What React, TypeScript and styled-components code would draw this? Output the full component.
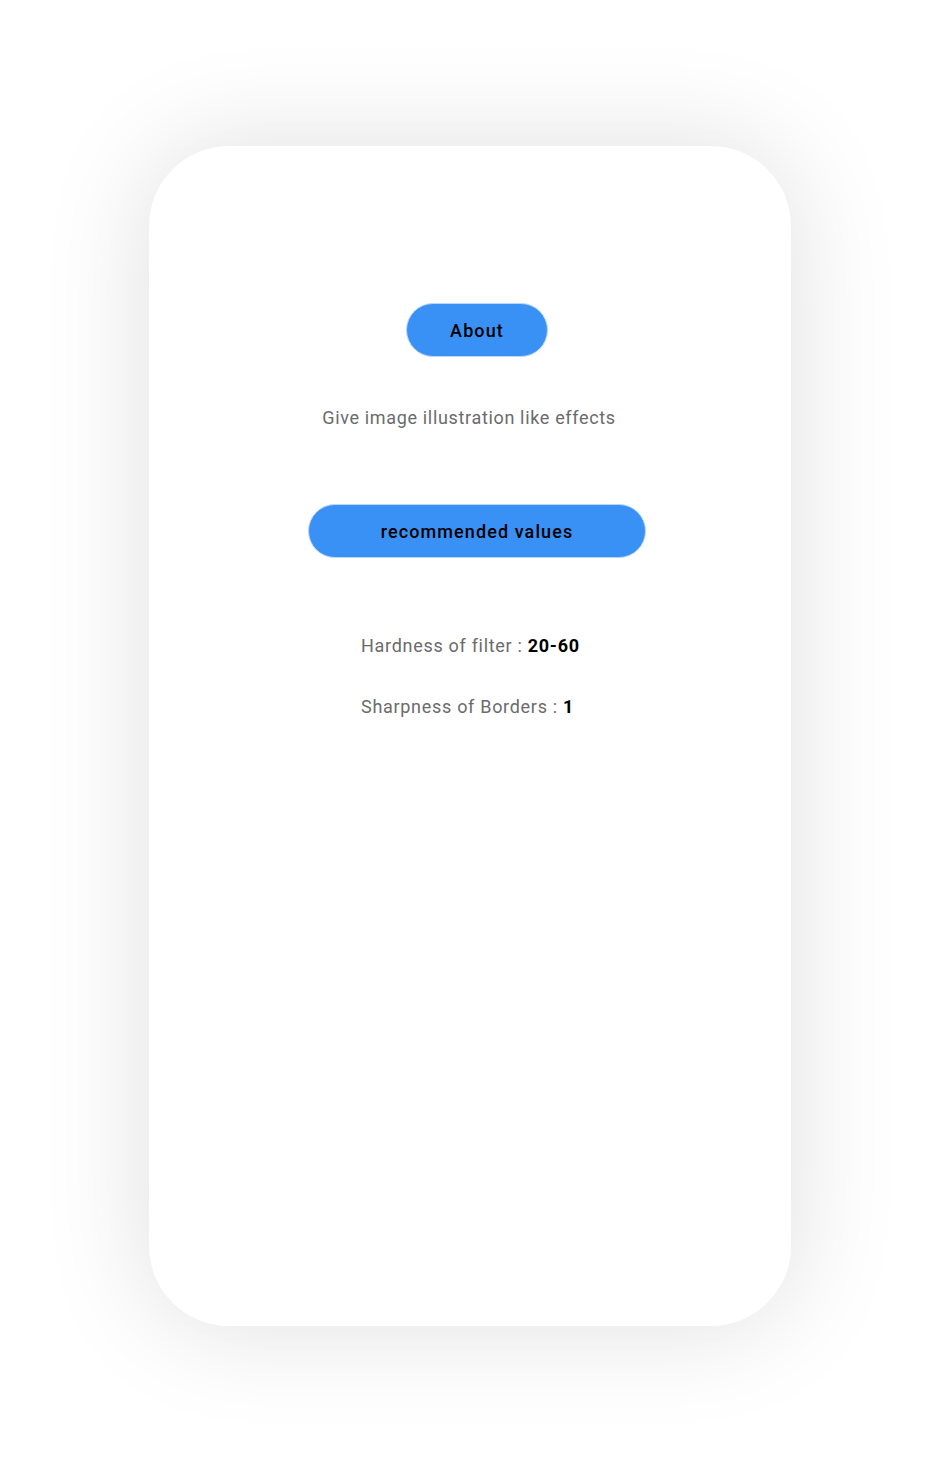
import React from "react";
import styled, { createGlobalStyle } from "styled-components";

const Global = createGlobalStyle`
  html, body { margin: 0; padding: 0; background: #ffffff; }
  body { font-family: Roboto, "Liberation Sans", sans-serif; }
`;

const Page = styled.div`
  width: 940px;
  height: 1478px;
  padding-top: 146px;
  box-sizing: border-box;
  display: flex;
  justify-content: center;
`;

const Card = styled.div`
  width: 642px;
  height: 1180px;
  border-radius: 80px;
  background: #ffffff;
  box-shadow: 0 0 110px rgba(0, 0, 0, 0.13);
  display: flex;
  flex-direction: column;
  align-items: center;
  padding-top: 157px;
  box-sizing: border-box;
`;

const PillButton = styled.button<{ $w: number }>`
  width: ${(p) => p.$w}px;
  height: 54px;
  border-radius: 27px;
  background: #3a91f5;
  border: 1px solid #b9d6fb;
  color: #000;
  font-family: Roboto, "Liberation Sans", sans-serif;
  font-size: 18px;
  font-weight: 500;
  letter-spacing: 1.1px;
  display: flex;
  align-items: center;
  justify-content: center;
  padding: 0;
  margin-left: 14px;
`;

const Description = styled.p`
  margin: 46px 0 71px;
  color: #6b6b6b;
  font-size: 18px;
  letter-spacing: 0.66px;
  line-height: 30px;
  transform: translateX(-1px);
`;

const Values = styled.div`
  margin-top: 73px;
  display: flex;
  flex-direction: column;
  gap: 31px;
  align-self: flex-start;
  margin-left: 212px;
`;

const ValueRow = styled.div`
  color: #6b6b6b;
  font-size: 18px;
  letter-spacing: 0.7px;
  line-height: 30px;
`;

const Strong = styled.span`
  color: #000;
  font-weight: 700;
`;

export default function App() {
  return (
    <>
      <Global />
      <Page>
        <Card>
          <PillButton $w={142}>About</PillButton>
          <Description>Give image illustration like effects</Description>
          <PillButton $w={338}>recommended values</PillButton>
          <Values>
            <ValueRow>
              Hardness of filter : <Strong>20-60</Strong>
            </ValueRow>
            <ValueRow>
              Sharpness of Borders : <Strong>1</Strong>
            </ValueRow>
          </Values>
        </Card>
      </Page>
    </>
  );
}
